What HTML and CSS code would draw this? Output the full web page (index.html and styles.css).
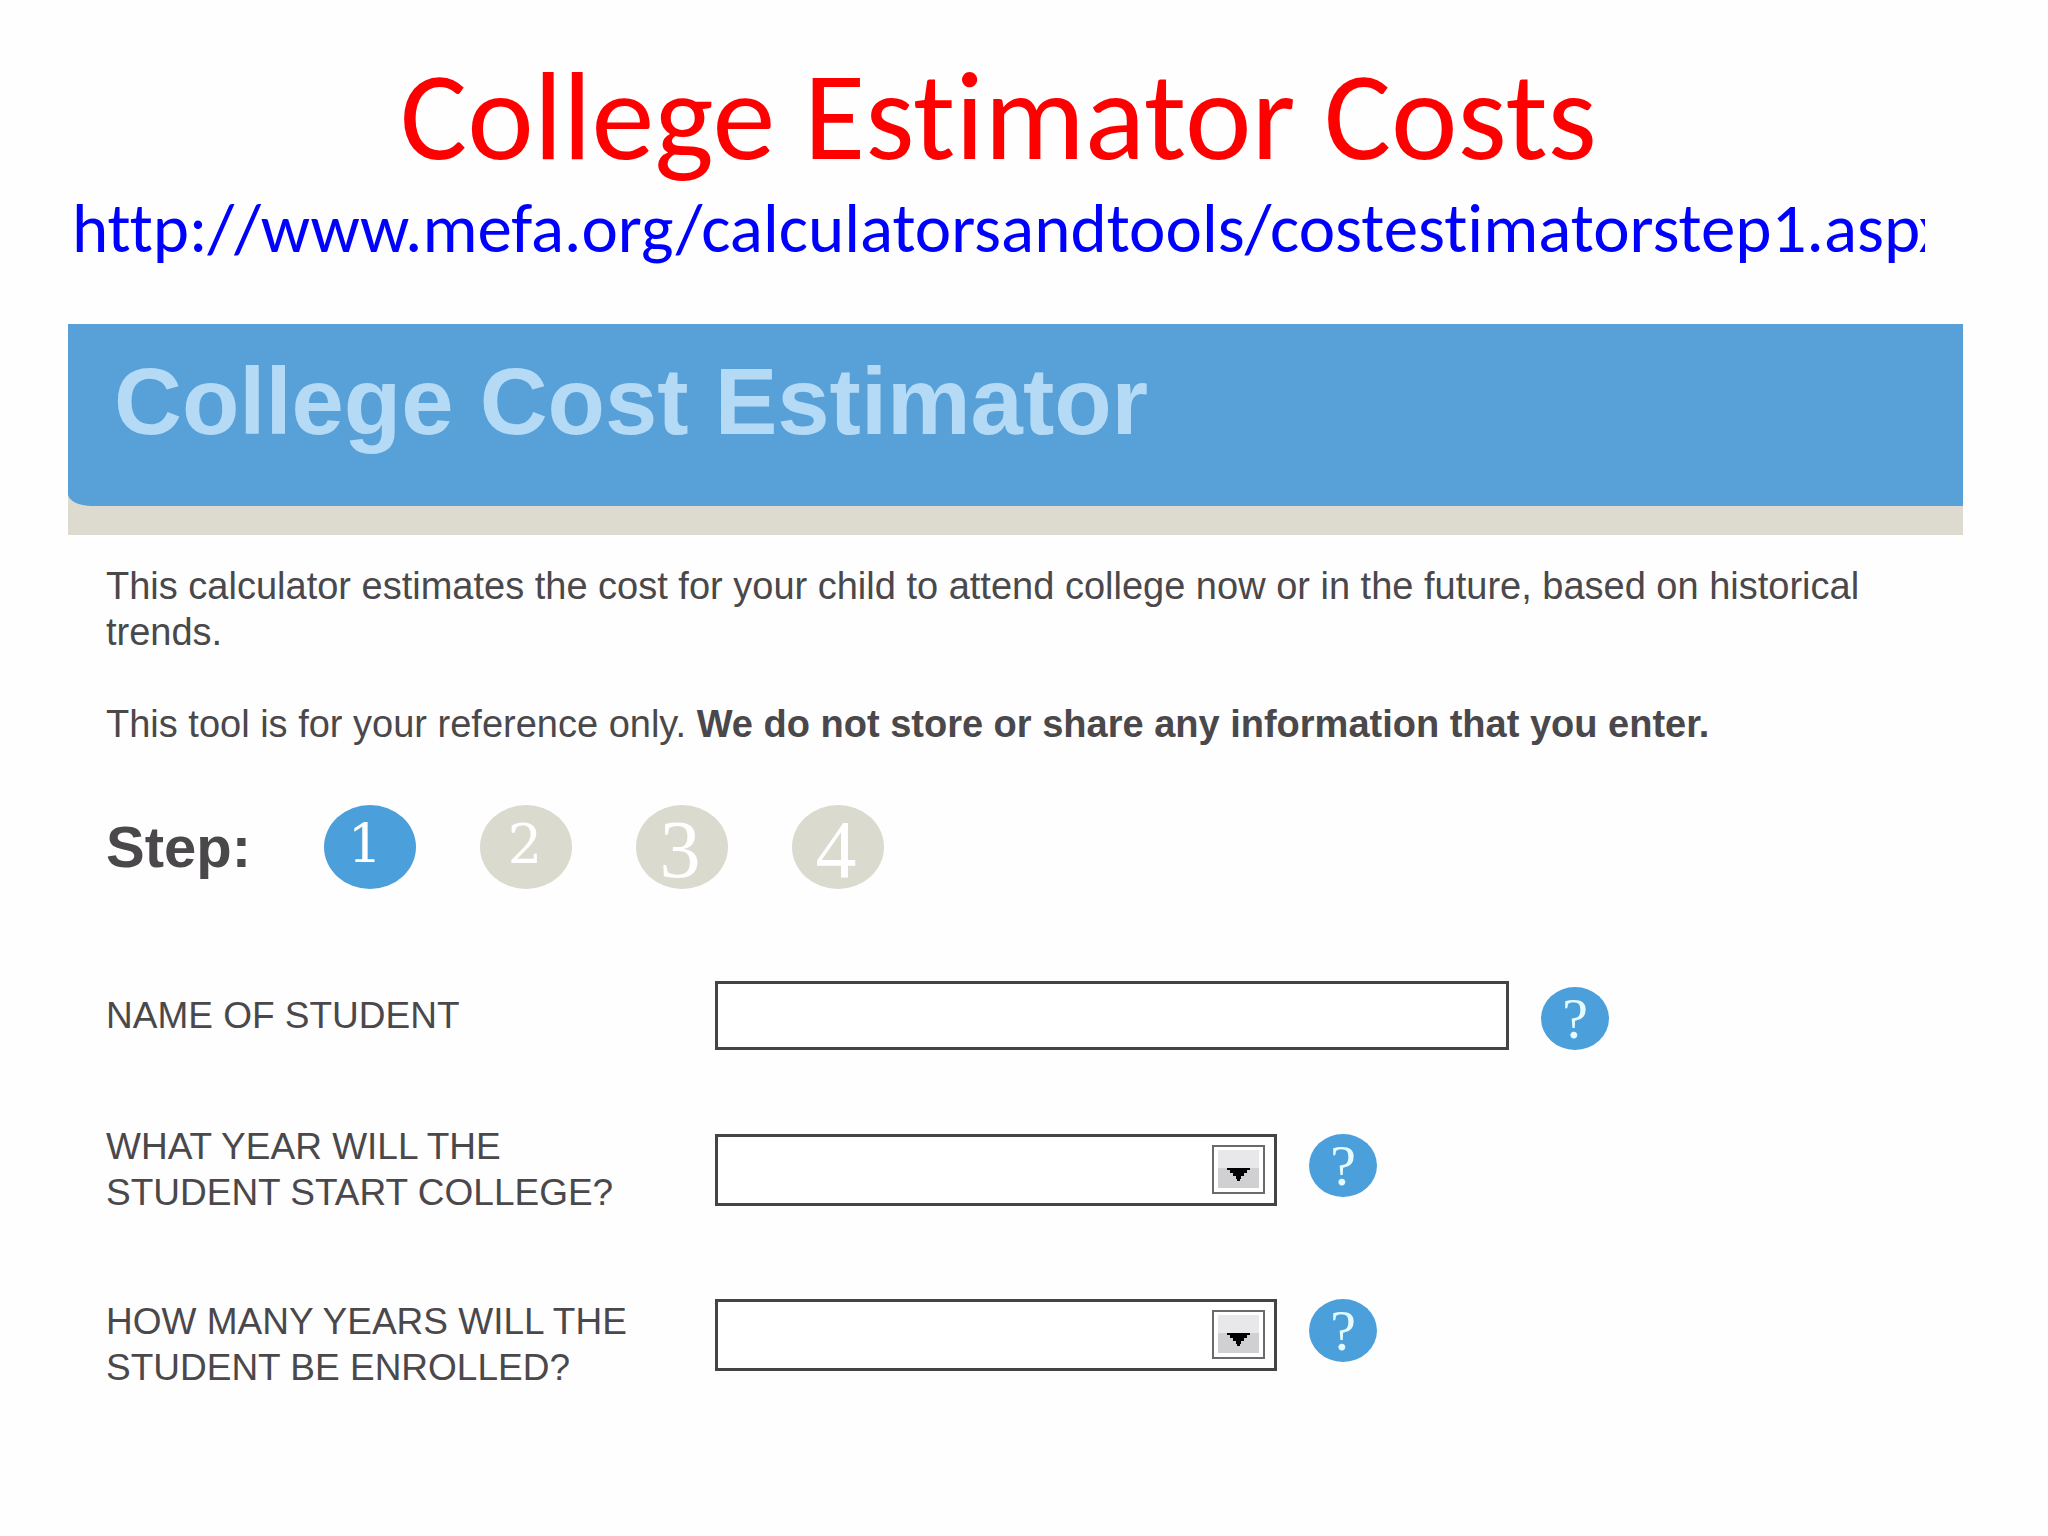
FILE: index.html
```html
<!DOCTYPE html>
<html lang="en">
<head>
    <meta charset="UTF-8">
    <title>College Estimator Costs</title>
    <link rel="stylesheet" href="styles.css">
</head>
<body>
    <header class="top">
        <h1>College Estimator Costs</h1>
        <a class="source" href="http://www.mefa.org/calculatorsandtools/costestimatorstep1.aspx">http://www.mefa.org/calculatorsandtools/costestimatorstep1.aspx</a>
    </header>

    <main class="panel">
        <div class="banner">
            <h2>College Cost Estimator</h2>
        </div>

        <div class="content">
            <p>This calculator estimates the cost for your child to attend college now or in the future, based on historical trends.</p>
            <p>This tool is for your reference only. <b>We do not store or share any information that you enter.</b></p>

            <div class="steps">
                <h3>Step:</h3>
                <ol>
                    <li>
                        <svg class="step current" viewBox="0 0 92 84">
                            <ellipse cx="46" cy="42" rx="46" ry="42"/>
                            <text class="digit" x="41" y="58">1</text>
                        </svg>
                    </li>
                    <li>
                        <svg class="step" viewBox="0 0 92 84">
                            <ellipse cx="46" cy="42" rx="46" ry="42"/>
                            <text class="digit" x="45" y="58">2</text>
                        </svg>
                    </li>
                    <li>
                        <svg class="step" viewBox="0 0 92 84">
                            <ellipse cx="46" cy="42" rx="46" ry="42"/>
                            <text class="digit tall" x="44" y="72">3</text>
                        </svg>
                    </li>
                    <li>
                        <svg class="step" viewBox="0 0 92 84">
                            <ellipse cx="46" cy="42" rx="46" ry="42"/>
                            <text class="digit tall" x="44" y="72">4</text>
                        </svg>
                    </li>
                </ol>
            </div>

            <form>
                <div class="field">
                    <label for="student">NAME OF STUDENT</label>
                    <div class="control control-text">
                        <input type="text" id="student">
                        <button type="button" class="help" aria-label="Help">?</button>
                    </div>
                </div>

                <div class="field">
                    <label for="start">WHAT YEAR WILL THE<br>STUDENT START COLLEGE?</label>
                    <div class="control">
                        <div class="dropdown">
                            <select id="start"><option></option></select>
                            <svg class="arrow" viewBox="0 0 53 49">
                                <rect class="arrow-frame" x="1" y="1" width="51" height="47"/>
                                <rect class="arrow-top" x="6" y="5" width="41" height="18"/>
                                <rect class="arrow-bottom" x="6" y="23" width="41" height="20"/>
                                <path d="M15 23h23v2h-3v3h-3v3h-3v3h-1v2h-3v-2h-1v-3h-3v-3h-3v-3h-3z"/>
                            </svg>
                        </div>
                        <button type="button" class="help" aria-label="Help">?</button>
                    </div>
                </div>

                <div class="field field-last">
                    <label for="years">HOW MANY YEARS WILL THE<br>STUDENT BE ENROLLED?</label>
                    <div class="control">
                        <div class="dropdown">
                            <select id="years"><option></option></select>
                            <svg class="arrow" viewBox="0 0 53 49">
                                <rect class="arrow-frame" x="1" y="1" width="51" height="47"/>
                                <rect class="arrow-top" x="6" y="5" width="41" height="18"/>
                                <rect class="arrow-bottom" x="6" y="23" width="41" height="20"/>
                                <path d="M15 23h23v2h-3v3h-3v3h-3v3h-1v2h-3v-2h-1v-3h-3v-3h-3v-3h-3z"/>
                            </svg>
                        </div>
                        <button type="button" class="help" aria-label="Help">?</button>
                    </div>
                </div>
            </form>
        </div>
    </main>
</body>
</html>
```

FILE: styles.css
```css
* {
    box-sizing: border-box;
}
body {
    font-family: "Liberation Sans", Arial, sans-serif;
    font-size: 37px;
    line-height: 46px;
    color: #4a484b;
    background-color: #fefefe;
    margin: 0;
}
h1, h2, h3, p, ol {
    margin: 0;
    padding: 0;
}
.top {
    padding: 48px 123px 0 72px;
    font-family: Carlito, Calibri, Lato, sans-serif;
    font-variant-ligatures: none;
}
h1 {
    font-size: 126px;
    line-height: 136px;
    font-weight: normal;
    color: #ff0000;
    text-align: center;
    white-space: nowrap;
}
.source {
    display: block;
    font-size: 69px;
    line-height: 90px;
    color: #0000ff;
    text-decoration: none;
    white-space: nowrap;
    overflow: hidden;
}
.panel {
    margin: 50px 85px 0 68px;
}
.banner {
    background-color: #dddbcf;
    padding-bottom: 29px;
}
h2 {
    padding: 24px 46px 50px;
    font-size: 94px;
    line-height: 108px;
    color: #b5daf6;
    background-color: #57a1d8;
    border-bottom-left-radius: 24px 12px;
}
.content {
    padding: 28px 60px 60px 38px;
}
p {
    margin-bottom: 46px;
    font-size: 38px;
}
.steps {
    display: flex;
    align-items: center;
    gap: 73px;
    margin: 58px 0 92px;
}
h3 {
    font-size: 58px;
    line-height: 84px;
}
ol {
    display: flex;
    gap: 64px;
    list-style: none;
}
.step {
    display: block;
    width: 92px;
    height: 84px;
    fill: #dadace;
    overflow: visible;
}
.current {
    fill: #4b9fda;
}
.digit {
    font-family: "DejaVu Serif", Georgia, serif;
    font-size: 54px;
    text-anchor: middle;
    fill: #fff;
}
.tall {
    font-family: "Liberation Serif", Georgia, serif;
    font-size: 82px;
}
.field {
    display: grid;
    grid-template-columns: 609px 1fr;
    align-items: center;
    margin-top: 74px;
}
.field-last {
    align-items: start;
    margin-top: 83px;
}
.control {
    display: flex;
    align-items: flex-start;
    gap: 32px;
}
.control-text {
    align-items: flex-end;
}
input, select {
    display: block;
    padding: 0 16px;
    font: inherit;
    color: inherit;
    background-color: #fff;
    border: 3px solid #464347;
    border-radius: 0;
}
input {
    width: 794px;
    height: 69px;
}
.dropdown {
    position: relative;
}
select {
    width: 562px;
    height: 72px;
    appearance: none;
}
.arrow {
    position: absolute;
    top: 11px;
    right: 12px;
    width: 53px;
    height: 49px;
    pointer-events: none;
}
.arrow-frame {
    fill: #fff;
    stroke: #6b696c;
    stroke-width: 2;
}
.arrow-top {
    fill: #e8e7e9;
}
.arrow-bottom {
    fill: #d0cfd1;
}
.help {
    width: 68px;
    height: 63px;
    padding: 0;
    font-family: "Liberation Serif", Georgia, serif;
    font-size: 58px;
    line-height: 63px;
    color: #e6fbff;
    background-color: #4b9fda;
    border: none;
    border-radius: 50%;
    cursor: pointer;
}
```
